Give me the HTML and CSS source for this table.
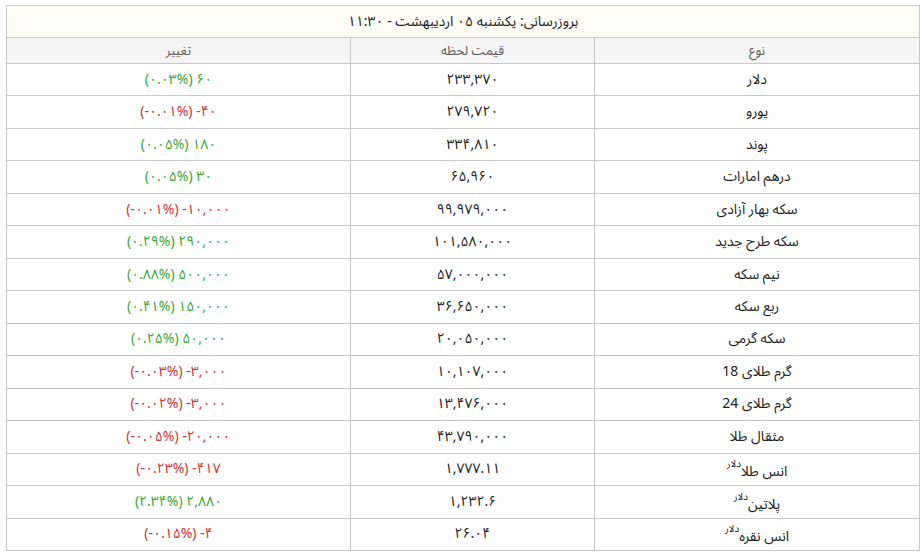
FILE: index.html
```html
<!DOCTYPE html>
<html lang="fa" dir="rtl">
<head>
<meta charset="utf-8">
<title>نرخ ارز</title>
<link rel="stylesheet" href="styles.css">
</head>
<body>
<div class="wrap">
<table class="rates">
<colgroup>
<col class="c-name">
<col class="c-price">
<col class="c-chg">
</colgroup>
<thead>
<tr class="title-row"><th colspan="3">بروزرسانی: یکشنبه ۰۵ اردیبهشت - ۱۱:۳۰</th></tr>
<tr class="head-row"><th>نوع</th><th>قیمت لحظه</th><th>تغییر</th></tr>
</thead>
<tbody>
<tr><td>دلار</td><td>۲۳۳,۳۷۰</td><td class="chg up">(۰.۰۳%) ۶۰</td></tr>
<tr><td>یورو</td><td>۲۷۹,۷۲۰</td><td class="chg down">(-۰.۰۱%) -۴۰</td></tr>
<tr><td>پوند</td><td>۳۳۴,۸۱۰</td><td class="chg up">(۰.۰۵%) ۱۸۰</td></tr>
<tr><td>درهم امارات</td><td>۶۵,۹۶۰</td><td class="chg up">(۰.۰۵%) ۳۰</td></tr>
<tr><td>سکه بهار آزادی</td><td>۹۹,۹۷۹,۰۰۰</td><td class="chg down">(-۰.۰۱%) -۱۰,۰۰۰</td></tr>
<tr><td>سکه طرح جدید</td><td>۱۰۱,۵۸۰,۰۰۰</td><td class="chg up">(۰.۲۹%) ۲۹۰,۰۰۰</td></tr>
<tr><td>نیم سکه</td><td>۵۷,۰۰۰,۰۰۰</td><td class="chg up">(۰.۸۸%) ۵۰۰,۰۰۰</td></tr>
<tr><td>ربع سکه</td><td>۳۶,۶۵۰,۰۰۰</td><td class="chg up">(۰.۴۱%) ۱۵۰,۰۰۰</td></tr>
<tr><td>سکه گرمی</td><td>۲۰,۰۵۰,۰۰۰</td><td class="chg up">(۰.۲۵%) ۵۰,۰۰۰</td></tr>
<tr><td>گرم طلای 18</td><td>۱۰,۱۰۷,۰۰۰</td><td class="chg down">(-۰.۰۳%) -۳,۰۰۰</td></tr>
<tr><td>گرم طلای 24</td><td>۱۳,۴۷۶,۰۰۰</td><td class="chg down">(-۰.۰۲%) -۳,۰۰۰</td></tr>
<tr><td>مثقال طلا</td><td>۴۳,۷۹۰,۰۰۰</td><td class="chg down">(-۰.۰۵%) -۲۰,۰۰۰</td></tr>
<tr><td>انس طلا&zwnj;<sup>دلار</sup></td><td>۱,۷۷۷.۱۱</td><td class="chg down">(-۰.۲۳%) -۴۱۷</td></tr>
<tr><td>پلاتین&zwnj;<sup>دلار</sup></td><td>۱,۲۳۲.۶</td><td class="chg up">(۲.۳۴%) ۲,۸۸۰</td></tr>
<tr><td>انس نقره&zwnj;<sup>دلار</sup></td><td>۲۶.۰۴</td><td class="chg down">(-۰.۱۵%) -۴</td></tr>
</tbody>
</table>
</div>
</body>
</html>
```
FILE: styles.css
```css
html, body {
  margin: 0;
  padding: 0;
  background: #fff;
}
.wrap {
  padding: 5px 4px 0 7px;
}
.rates {
  width: 913px;
  border-collapse: collapse;
  table-layout: fixed;
  font-family: "Noto Sans Arabic", "Noto Naskh Arabic", "Vazirmatn", "DejaVu Sans", sans-serif;
  font-size: 14px;
  line-height: 18px;
  color: #222;
}
.rates th, .rates td {
  border: 1px solid #c8c8c8;
  text-align: center;
  padding: 0;
}
.title-row th {
  height: 31px;
  background: #fdfdf6;
  font-weight: normal;
  font-size: 14px;
  color: #222;
}
.head-row th {
  height: 25px;
  background: #f5f5f5;
  font-weight: normal;
  font-size: 13px;
  color: #5a5a5a;
}
.c-name { width: 325px; }
.c-price { width: 244px; }
.c-chg { width: 344px; }
.rates td {
  height: 31.47px;
}
.rates sup {
  font-size: 10px;
  vertical-align: 9px;
  line-height: 14px;
}
.chg {
  direction: ltr;
}
.up { color: #33a832; }
.down { color: #d42f36; }
```
